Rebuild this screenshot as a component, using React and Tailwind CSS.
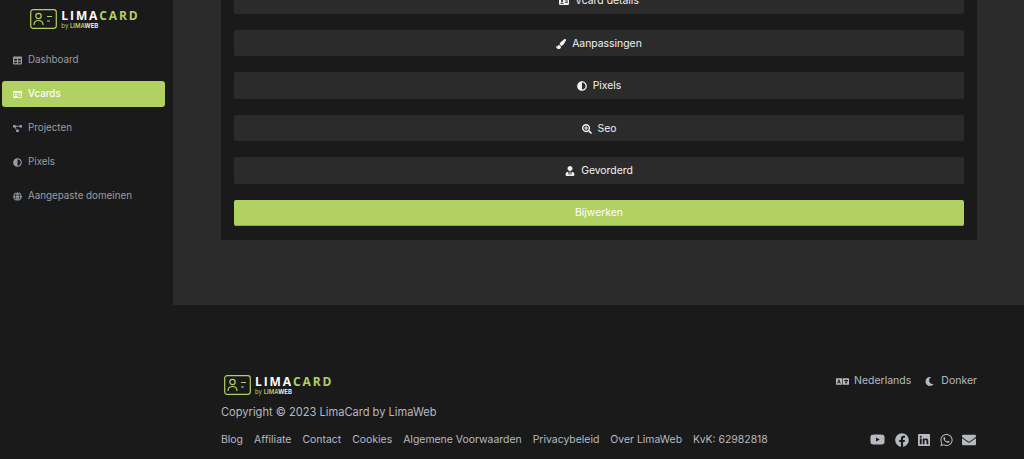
import React from "react";
import { FaTable, FaIdCard, FaProjectDiagram, FaAdjust, FaGlobe, FaPaintBrush, FaSearchPlus, FaUserTie, FaLanguage, FaMoon, FaYoutube, FaFacebook, FaLinkedin, FaWhatsapp, FaEnvelope, FaRegIdCard } from "react-icons/fa";

function Logo() {
  return (
    <div className="flex items-center gap-[4px]">
      <svg width="27" height="20" viewBox="0 0 27 20" fill="none" stroke="#b1d162" strokeWidth="1.2">
        <rect x="0.7" y="0.7" width="25.6" height="18.6" rx="2.5" />
        <circle cx="8.500" cy="7" r="2.7" />
        <path d="M4 16c0-3 2-4.500 4.500-4.500s4.500 1.500 4.500 4.500" />
        <path d="M17 7.500h5M17 12h3" />
      </svg>
      <div className="flex flex-col">
        <div className="text-[12px] leading-[13px] font-bold tracking-[1.9px] text-white font-['Open_Sans','Inter',sans-serif]">
          LIMA<span className="text-[#b1d162]">CARD</span>
        </div>
        <div className="text-[6px] leading-[7px] text-[#b1d162] font-['Inter',sans-serif]">
          by <span className="font-semibold">LIMA</span><span className="font-semibold text-white">WEB</span>
        </div>
      </div>
    </div>
  );
}

const nav = [
  [FaTable, "Dashboard"],
  [FaRegIdCard, "Vcards", true],
  [FaProjectDiagram, "Projecten"],
  [FaAdjust, "Pixels"],
  [FaGlobe, "Aangepaste domeinen"],
];

const sections = [
  [FaIdCard, "Vcard details"],
  [FaPaintBrush, "Aanpassingen"],
  [FaAdjust, "Pixels"],
  [FaSearchPlus, "Seo"],
  [FaUserTie, "Gevorderd"],
];

const links = ["Blog", "Affiliate", "Contact", "Cookies", "Algemene Voorwaarden", "Privacybeleid", "Over LimaWeb", "KvK: 62982818"];

export default function App() {
  return (
    <div className="flex h-[459px] overflow-hidden bg-[#2b2b2b] font-['Inter',sans-serif]">
      <aside className="w-[173px] shrink-0 bg-[#1a1a1a]">
        <div className="flex justify-center pt-[9px] pr-[3px] pb-[18px]">
          <Logo />
        </div>
        <nav className="flex flex-col gap-[8.500px] pl-[1.500px] pr-[8px]">
          {nav.map(([Icon, label, active]) => (
            <div
              key={label}
              className={`flex h-[25.500px] items-center gap-[6px] rounded-[3px] pl-[11.500px] pt-[2px] text-[9.800px] ${active ? "bg-[#b1d162] text-white font-medium" : "text-[#9a9da5]"}`}
            >
              <Icon className="h-[9px] w-[9px] shrink-0" />
              <span>{label}</span>
            </div>
          ))}
        </nav>
      </aside>
      <div className="flex min-w-0 flex-1 flex-col justify-end">
        <main className="shrink-0 pl-[48px] pr-[47px] pb-[65px]">
          <div className="bg-[#1a1a1a] px-[13px] pb-[14px]">
            <div className="flex flex-col gap-[16px]">
              {sections.map(([Icon, label]) => (
                <div key={label} className="flex h-[26.500px] items-center justify-center gap-[6px] rounded-[2px] bg-[#2b2b2b] pt-[2px] text-[10.400px] text-[#f1f1f1]">
                  <Icon className="h-[10px] w-[10px]" />
                  <span>{label}</span>
                </div>
              ))}
              <div className="flex h-[26.500px] items-center justify-center rounded-[2px] border-b border-[#8fa84f] bg-[#b1d162] pt-[2px] text-[10.400px] text-white">
                Bijwerken
              </div>
            </div>
          </div>
        </main>
        <footer className="h-[154px] shrink-0 bg-[#1a1a1a] pl-[48px] pr-[47px] pt-[70px]">
          <div className="flex items-start justify-between">
            <div className="pl-[3px]">
              <Logo />
            </div>
            <div className="-mt-[1px] flex items-center gap-[14px] text-[10.500px] leading-[14px] text-[#b6b9c0]">
              <div className="flex items-center gap-[5px]">
                <FaLanguage className="h-[13px] w-[13px]" />
                <span>Nederlands</span>
              </div>
              <div className="flex items-center gap-[7px]">
                <FaMoon className="h-[9px] w-[9px]" />
                <span>Donker</span>
              </div>
            </div>
          </div>
          <div className="mt-[10px] text-[11.100px] leading-[14px] text-[#b6b9c0]">Copyright © 2023 LimaCard by LimaWeb</div>
          <div className="mt-[13px] flex items-center justify-between">
            <div className="flex gap-[11px] text-[10.450px] leading-[14px] text-[#b6b9c0]">
              {links.map((l) => (
                <span key={l}>{l}</span>
              ))}
            </div>
            <div className="mr-px flex items-center gap-[9.500px] text-[#b6b9c0]">
              <FaYoutube className="h-[15px] w-[15px]" />
              <FaFacebook className="h-[14px] w-[14px]" />
              <FaLinkedin className="h-[14px] w-[12px]" />
              <FaWhatsapp className="h-[14px] w-[13px]" />
              <FaEnvelope className="h-[14px] w-[14px]" />
            </div>
          </div>
        </footer>
      </div>
    </div>
  );
}
